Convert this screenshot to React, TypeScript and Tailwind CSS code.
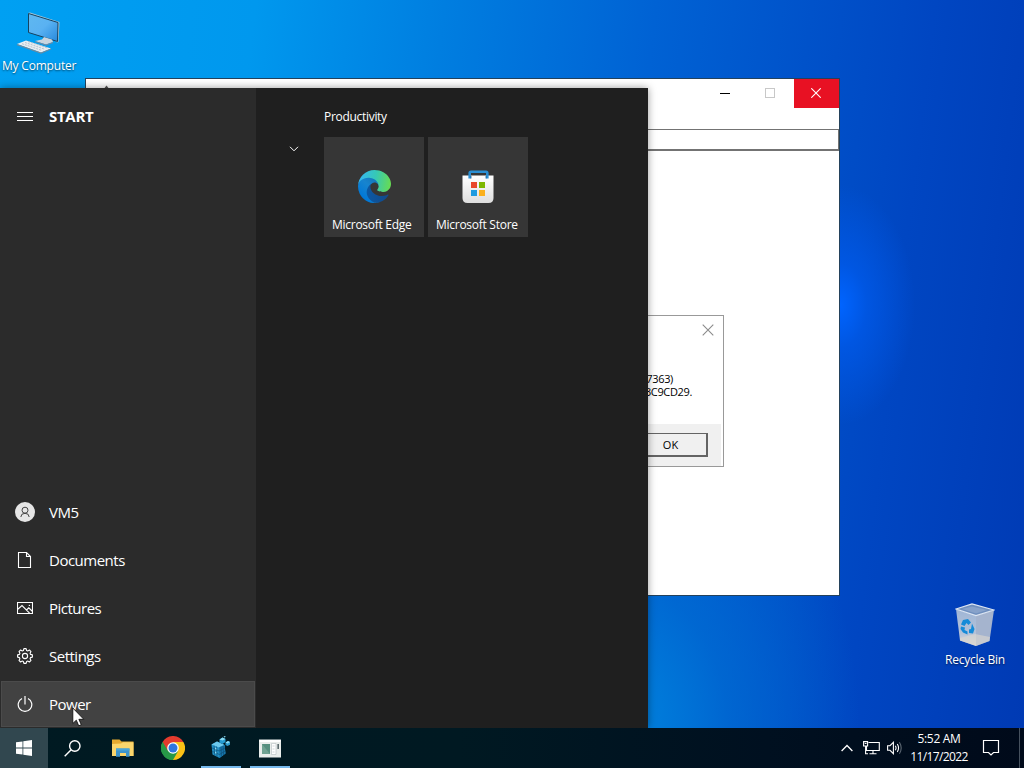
import type { ReactNode } from "react";

function ComputerIcon() {
  return (
    <svg width="44" height="44" viewBox="0 0 44 44">
      <defs>
        <linearGradient id="screen" x1="0" y1="0" x2="1" y2="1">
          <stop offset="0" stopColor="#5fb8f0" />
          <stop offset="0.5" stopColor="#5ab2f2" />
          <stop offset="1" stopColor="#2688dc" />
        </linearGradient>
      </defs>
      <path d="M11 2 L13 1.5 L42.5 11 L41.5 31 L40 31.5 Z" fill="#a9c9dc" />
      <path d="M11.5 2.5 L41 11.5 L40.5 30.5 L11.5 21.5 Z" fill="url(#screen)" stroke="#16425f" strokeWidth="1" />
      <path d="M27 26 L35 28.5 L36 31 L29 33.5 L18 30 L25 28.5 Z" fill="#c9d5df" />
      <path d="M18 30 L29 33.5 L36 31 L36 32 L29 34.7 L18 31 Z" fill="#6c8aa5" />
      <path d="M0 33 L9 29.5 L34 37.5 L24 41.5 Z" fill="#e8edf2" />
      <path d="M0 33 L24 41.5 L34 37.5 L34 38.5 L24 42.8 L0 34.2 Z" fill="#6e8a9c" />
      <path d="M5 32.7 L25 39.5 M8 31.5 L28 38.3 M11 30.5 L31 37.2" stroke="#a9b7c2" strokeWidth=".8" strokeDasharray="2 1" />
    </svg>
  );
}

function RecycleIcon() {
  return (
    <svg width="40" height="44" viewBox="0 0 40 44">
      <defs>
        <linearGradient id="bin" x1="0" y1="0" x2="0" y2="1">
          <stop offset="0" stopColor="#9eb5d6" />
          <stop offset="0.65" stopColor="#b4c2d8" />
          <stop offset="1" stopColor="#e0dcd6" />
        </linearGradient>
      </defs>
      <path d="M1 6 L21 12.5 L21 43 L5 37.5 Z" fill="url(#bin)" />
      <path d="M21 12.5 L39 7 L34.5 38 L21 43 Z" fill="#a5b4ce" />
      <path d="M5 35 L20 31 L35 34 L34.5 38 L21 43 L5 37.5 Z" fill="#d8d5d0" opacity=".65" />
      <path d="M1 6 L17 1 L39 7 L21 12.5 Z" fill="#6f8fbe" stroke="#dde6f2" strokeWidth="1.2" />
      <path d="M7 6 L17 3.5 L32 7 L21 10.5 Z" fill="#87a2ca" />
      <path d="M8 17 L13 16 L16 19.5 L13.5 22 L11.5 20 L9.5 23 L6 21.5 Z M17 20.5 L19.5 26 L18 30.5 L14 30 L14 26.5 L16 26 Z M6 23.5 L10 24.5 L9.5 27 L12.5 28.5 L12.5 31.5 L8 29.5 L5.5 26 Z" fill="#158bd8" />
    </svg>
  );
}

function EdgeIcon() {
  return (
    <svg width="33" height="33" viewBox="0 0 256 256">
      <defs>
        <linearGradient id="edgeDeep" x1="58" y1="177" x2="236" y2="177" gradientUnits="userSpaceOnUse">
          <stop offset="0" stopColor="#0c59a4" />
          <stop offset="1" stopColor="#114a8b" />
        </linearGradient>
        <linearGradient id="edgeBlue" x1="157" y1="100" x2="46" y2="221" gradientUnits="userSpaceOnUse">
          <stop offset="0" stopColor="#1578bd" />
          <stop offset="0.4" stopColor="#1784cf" />
          <stop offset="1" stopColor="#0078d7" />
        </linearGradient>
        <linearGradient id="edgeGreen" x1="15" y1="70" x2="250" y2="105" gradientUnits="userSpaceOnUse">
          <stop offset="0" stopColor="#35b8ee" />
          <stop offset="0.5" stopColor="#36c8b5" />
          <stop offset="1" stopColor="#66db55" />
        </linearGradient>
      </defs>
      <path
        fill="url(#edgeDeep)"
        d="M231.07 190.54c-3.43 1.8-6.96 3.37-10.54 4.71a101.88 101.88 0 0 1-35.89 6.46c-47.32 0-88.54-32.55-88.54-74.32.12-11.41 6.4-21.87 16.43-27.33-42.8 1.8-53.8 46.4-53.8 72.53 0 73.88 68.1 81.37 82.76 81.37 7.91 0 19.84-2.3 27-4.56l1.31-.44a128.34 128.34 0 0 0 66.6-52.8 4 4 0 0 0-5.33-5.62Z"
      />
      <path
        fill="url(#edgeBlue)"
        d="M105.73 241.42a79.2 79.2 0 0 1-22.74-21.34 80.72 80.72 0 0 1 29.53-120c3.12-1.47 8.45-4.12 15.54-4 10.13.07 19.63 4.88 25.69 13a31.88 31.88 0 0 1 6.36 18.66c0-.2 24.46-79.6-80-79.6-43.9 0-80 41.66-80 78.21a130.15 130.15 0 0 0 12.11 56 128 128 0 0 0 156.37 67.11 75.55 75.55 0 0 1-62.78-8Z"
      />
      <path
        fill="url(#edgeGreen)"
        d="M152.33 148.86c-.81 1.05-3.3 2.5-3.3 5.66 0 2.61 1.7 5.12 4.72 7.23 14.38 10 41.49 8.68 41.56 8.68 10.7 0 21.1-2.9 30.3-8.34A61.38 61.38 0 0 0 256 109.08c.26-22.41-8-37.31-11.34-43.91C223.46 23.84 177.72 0 128 0A128 128 0 0 0 0 126.2c.48-36.54 36.8-66.05 80-66.05 3.5 0 23.46.34 42 10.07 16.34 8.58 24.9 18.94 30.85 29.21 6.18 10.67 7.28 24.15 7.28 29.52s-2.74 13.33-7.8 19.91Z"
      />
    </svg>
  );
}

function StoreIcon() {
  return (
    <svg width="32" height="34" viewBox="0 0 32 34">
      <defs>
        <linearGradient id="bag" x1="0" y1="0" x2="0" y2="1">
          <stop offset="0" stopColor="#ffffff" />
          <stop offset="1" stopColor="#dedede" />
        </linearGradient>
      </defs>
      <path d="M.5 5.5 H31.5 V28 Q31.5 33 26.5 33 H5.5 Q.5 33 .5 28 Z" fill="url(#bag)" />
      <path d="M7.7 8.5 V3 Q7.7 1.7 9 1.7 H24 Q25.3 1.7 25.3 3 V8.5" fill="none" stroke="#2a8fd4" strokeWidth="2.6" />
      <path d="M9 6 V8.5 M24 6 V8.5" stroke="#145d96" strokeWidth=".8" />
      <path d="M9 12 H15 V18 H9 Z" fill="#e8472b" />
      <path d="M17 12 H23 V18 H17 Z" fill="#7db700" />
      <path d="M9 20 H15 V26 H9 Z" fill="#1e9be0" />
      <path d="M17 20 H23 V26 H17 Z" fill="#fbb01c" />
    </svg>
  );
}

function UserIcon() {
  return (
    <svg width="20" height="20" viewBox="0 0 20 20">
      <circle cx="10" cy="10" r="10" fill="#e6e6e6" />
      <circle cx="10" cy="8.2" r="3" fill="none" stroke="#444" strokeWidth="1" />
      <path d="M5.8 15 Q6 11.3 10 11.3 Q14 11.3 14.2 15" fill="none" stroke="#444" strokeWidth="1" />
    </svg>
  );
}

function DocumentIcon() {
  return (
    <svg width="16" height="16" viewBox="0 0 16 16" fill="none" stroke="#fff" strokeWidth="1.1">
      <path d="M1.5 .5 H9.5 L13.5 4.5 V15.5 H1.5 Z M9.5 .5 V4.5 H13.5" />
    </svg>
  );
}

function PictureIcon() {
  return (
    <svg width="16" height="16" viewBox="0 0 16 16" fill="none" stroke="#fff" strokeWidth="1.1">
      <path d="M.5 2.5 H15.5 V13.5 H.5 Z M.5 9.5 L5 5.5 L12.8 13.3 M9.5 10 L11.8 7.8 L15.5 11.5" />
      <circle cx="12.4" cy="5.4" r=".7" fill="#fff" stroke="none" />
    </svg>
  );
}

function GearIcon() {
  return (
    <svg width="16" height="16" viewBox="0 0 16 16" fill="none" stroke="#fff" strokeWidth="1.1" strokeLinejoin="round">
      <path d="M6.9 .6 H9.1 L9.6 2.5 L10.7 2.9 L12.4 2 L14 3.6 L13.1 5.3 L13.5 6.4 L15.4 6.9 V9.1 L13.5 9.6 L13.1 10.7 L14 12.4 L12.4 14 L10.7 13.1 L9.6 13.5 L9.1 15.4 H6.9 L6.4 13.5 L5.3 13.1 L3.6 14 L2 12.4 L2.9 10.7 L2.5 9.6 L.6 9.1 V6.9 L2.5 6.4 L2.9 5.3 L2 3.6 L3.6 2 L5.3 2.9 L6.4 2.5 Z" />
      <circle cx="8" cy="8" r="2.6" />
    </svg>
  );
}

function PowerIcon() {
  return (
    <svg width="16" height="16" viewBox="0 0 16 16" fill="none" stroke="#fff" strokeWidth="1.2">
      <path d="M8 0 V8.5 M5 2.5 A6.8 6.8 0 1 0 11 2.5" />
    </svg>
  );
}

function ChromeIcon() {
  return (
    <svg width="24" height="24" viewBox="0 0 24 24">
      <path d="M12 12 L1.6 6 A12 12 0 0 1 22.4 6 Z" fill="#e33b2e" />
      <path d="M12 12 L22.4 6 A12 12 0 0 1 12 24 Z" fill="#fbc116" />
      <path d="M12 12 L12 24 A12 12 0 0 1 1.6 6 Z" fill="#279847" />
      <path d="M12 6 H22.4 L17 14.7 Z" fill="#fbc116" />
      <path d="M6.8 15 L1.6 6 L12 6.2 Z" fill="#e33b2e" />
      <path d="M1.6 6 L6.8 15 L12 17.5 L17.2 15 L12 24 A12 12 0 0 1 1.6 6 Z" fill="#279847" />
      <circle cx="12" cy="12" r="5.8" fill="#fff" />
      <circle cx="12" cy="12" r="4.5" fill="#2f76e0" />
    </svg>
  );
}

function FolderIcon() {
  return (
    <svg width="22" height="20" viewBox="0 0 22 20">
      <path d="M0 1.5 H7.5 L9.5 3.5 H21.5 V18 H0 Z" fill="#e5aa31" />
      <path d="M0 6 L9 5.5 L11 4.2 H21.5 V18 H0 Z" fill="#fbd66c" />
      <path d="M4 18.8 V10.5 H17.5 V18.8 H14 V15 H8 V18.8 Z" fill="#3d94cc" />
      <path d="M4 10.5 H17.5 V12.5 H4 Z" fill="#4ba6d9" />
    </svg>
  );
}

function RegistryIcon() {
  return (
    <svg width="22" height="24" viewBox="0 0 22 24">
      <path d="M1.5 8.5 L7 5.5 L14.5 9 L15.5 17.5 L9.5 22 L2.5 18.5 Z" fill="#2491c6" />
      <path d="M1.5 8.5 L7 5.5 L14.5 9 L9 11.5 Z" fill="#6cc8ec" />
      <path d="M9 11.5 L14.5 9 L15.5 17.5 L9.5 22 Z" fill="#1675ab" />
      <path d="M4 9.5 L4.8 19.7 M6.5 10.5 L7 20.8 M11 10.6 L11.5 20.5 M13 9.8 L13.6 19 M2 12 L9.2 15 L15 12 M2.2 15.3 L9.4 18.5 L15.2 15" stroke="#0b4a70" strokeWidth=".6" fill="none" />
      <path d="M9.5 3.5 L12.5 1.5 L15.5 3 V6 L12.5 8 L9.5 6.5 Z" fill="#249bd1" />
      <path d="M9.5 3.5 L12.5 1.5 L15.5 3 L12.5 4.6 Z" fill="#8bdcf4" />
      <path d="M15.5 6.5 L18 5 L20 6 V8.8 L17.5 10 L15.5 9 Z" fill="#2c9acb" />
      <path d="M15.5 6.5 L18 5 L20 6 L17.7 7.4 Z M13.5 .8 L14.8 0 L15.8 .7 L14.6 1.6 Z M5 11.5 L6.3 12.1 V13.8 L5 13.2 Z M5 15.5 L6.3 16.1 V17.8 L5 17.2 Z" fill="#8edcf4" />
    </svg>
  );
}

function AppWindowIcon() {
  return (
    <svg width="22" height="19" viewBox="0 0 22 19">
      <path d="M0 .5 H22 V18.5 H0 Z" fill="#e9edeb" />
      <path d="M.5 1 H21.5 V3 H.5 Z" fill="#fff" />
      <path d="M3 5 H11 V15 H3 Z" fill="#568f7f" />
      <path d="M3 5 L11 15 H3 Z" fill="#70a292" />
      <path d="M12.5 4.5 H17 V15.5 H12.5 Z" fill="#fff" stroke="#b3bdc0" strokeWidth=".6" />
      <path d="M13.5 7 H15.5 M13.5 10 H15.5 M13.5 13 H15.5" stroke="#bcc6c8" strokeWidth=".7" />
      <path d="M18.5 5 H19.8 V10 H18.5 Z" fill="#394b50" />
    </svg>
  );
}

function DesktopIcon({ label, children }: { label: ReactNode; children: ReactNode }) {
  return (
    <div className="flex flex-col items-center text-xs leading-4 text-white whitespace-nowrap [text-shadow:0_1px_2px_#0009]">
      {children}
      {label}
    </div>
  );
}

function MenuRow({ icon, label, active }: { icon: ReactNode; label: string; active?: boolean }) {
  return (
    <div
      className={
        active
          ? "flex items-center h-[46px] mt-px ml-px bg-[#424242] border border-[#4b4b4b] text-white"
          : "flex items-center h-12 text-white"
      }
    >
      <span className={active ? "w-[47px] pl-[15px] flex" : "w-[49px] flex justify-center"}>{icon}</span>
      <span className="text-[15px] tracking-[-0.5px]">{label}</span>
    </div>
  );
}

function Tile({ icon, label }: { icon: ReactNode; label: string }) {
  return (
    <div className="w-[100px] h-[100px] bg-[#363636] flex flex-col items-center pt-[33px]">
      <div className="h-[46px]">{icon}</div>
      <span className="w-full pl-2 text-xs leading-[18px] tracking-[-0.27px] text-white whitespace-nowrap">{label}</span>
    </div>
  );
}

function StartMenu() {
  return (
    <div className="absolute left-0 top-[88px] w-[648px] h-[640px] flex bg-[#1f1f1f] shadow-[0_0_8px_rgba(0,0,0,0.4)]">
      <aside className="w-64 bg-[#2b2b2b] flex flex-col justify-between">
        <div className="flex items-center h-14 pl-[17px] gap-4">
          <svg className="mt-px" width="16" height="10" viewBox="0 0 16 10" stroke="#fff">
            <path d="M0 .5 H16 M0 4.5 H16 M0 8.5 H16" />
          </svg>
          <span className="text-[15px] font-bold text-white tracking-[-0.3px]">START</span>
        </div>
        <div className="pr-px">
          <MenuRow icon={<UserIcon />} label="VM5" />
          <MenuRow icon={<DocumentIcon />} label="Documents" />
          <MenuRow icon={<PictureIcon />} label="Pictures" />
          <MenuRow icon={<GearIcon />} label="Settings" />
          <MenuRow icon={<PowerIcon />} label="Power" active />
          <div className="h-px" />
        </div>
      </aside>
      <div className="flex pl-[33px] pt-5">
        <svg className="mt-[38px] mr-[25px]" width="10" height="6" viewBox="0 0 10 6" fill="none" stroke="#fff">
          <path d="M1 .8 L5 4.8 L9 .8" />
        </svg>
        <div>
          <div className="text-xs leading-[18px] tracking-[-0.3px] text-white">Productivity</div>
          <div className="flex gap-1 mt-[11px]">
            <Tile icon={<EdgeIcon />} label="Microsoft Edge" />
            <Tile icon={<StoreIcon />} label="Microsoft Store" />
          </div>
        </div>
      </div>
    </div>
  );
}

function MessageBox() {
  return (
    <div className="absolute left-[360px] top-[236px] w-[278px] h-[152px] flex flex-col bg-white border border-[#999]">
      <div className="flex justify-end pt-2 pr-[9px] h-14">
        <svg width="12" height="12" viewBox="0 0 12 12" stroke="#8b8b8b" strokeWidth="1.1">
          <path d="M.7 .7 L11.3 11.3 M11.3 .7 L.7 11.3" />
        </svg>
      </div>
      <div className="flex-1 text-[11px] leading-[13px] tracking-[-0.35px] text-black flex flex-col items-end">
        <span className="pr-[50px]">7363)</span>
        <span className="pr-[31px]">3C9CD29.</span>
      </div>
      <div className="h-[42px] mr-[2px] bg-[#f0f0f0] flex justify-end pt-[9px] pr-[13px]">
        <button className="w-[74px] h-6 bg-[#f0f0f0] border-t border-l border-r-2 border-b-2 border-[#646464] text-[11px] leading-5 text-black">
          OK
        </button>
      </div>
    </div>
  );
}

function AppWindow() {
  return (
    <div className="absolute left-[85px] top-[78px] w-[755px] h-[518px] border border-[#24425c] bg-white">
      <div className="flex justify-end h-[50px] relative">
        <svg className="absolute left-4 top-[6px]" width="9" height="9" viewBox="0 0 9 9">
          <path d="M1 5 L4.5 .5 L8 5 V9 H1 Z" fill="#555" />
        </svg>
        <div className="w-[45px] h-[29px] flex justify-center items-center pr-[3px]">
          <div className="w-[10px] h-px bg-black" />
        </div>
        <div className="w-[45px] h-[29px] flex justify-center items-center pr-[3px] pb-px">
          <div className="w-[10px] h-[10px] border border-[#c8c8c8]" />
        </div>
        <div className="w-[45px] h-[29px] flex justify-center items-center pr-px pb-px bg-[#e81123]">
          <svg width="10" height="10" viewBox="0 0 10 10" stroke="#fff" strokeWidth="1.1">
            <path d="M.3 .3 L9.7 9.7 M9.7 .3 L.3 9.7" />
          </svg>
        </div>
      </div>
      <div className="h-[22px] border-t border-r border-b-2 border-[#737373]" />
      <MessageBox />
    </div>
  );
}

function TaskButton({ children, open }: { children: ReactNode; open?: boolean }) {
  return (
    <div className={open ? "w-10 h-10 mr-[9px] flex items-center justify-center border-b-2 border-[#76b9ed] pt-0.5" : "w-[50px] h-10 flex items-center justify-center"}>
      {children}
    </div>
  );
}

function Taskbar() {
  return (
    <footer className="h-10 flex items-center justify-between bg-[linear-gradient(90deg,#001a22_0%,#001922_45%,#001020_75%,#000a1a_100%)] text-white relative">
      <div className="flex">
        <div className="w-12 h-10 bg-[#31474f] flex items-center justify-center">
          <svg width="16" height="16" viewBox="0 0 16 16" fill="#fff">
            <path d="M0 2.3 L6.5 1.4 V7.6 H0 Z M7.3 1.3 L16 0 V7.6 H7.3 Z M0 8.4 H6.5 V14.6 L0 13.7 Z M7.3 8.4 H16 V16 L7.3 14.7 Z" />
          </svg>
        </div>
        <TaskButton>
          <svg className="-ml-0.5" width="17" height="17" viewBox="0 0 17 17" fill="none" stroke="#fff" strokeWidth="1.4">
            <circle cx="10.8" cy="6" r="5.2" />
            <path d="M7.2 9.8 L.7 16.3" />
          </svg>
        </TaskButton>
        <TaskButton><FolderIcon /></TaskButton>
        <TaskButton><ChromeIcon /></TaskButton>
        <div className="flex ml-[3px]">
          <TaskButton open><RegistryIcon /></TaskButton>
          <TaskButton open><AppWindowIcon /></TaskButton>
        </div>
      </div>
      <div className="flex items-center h-10">
        <svg className="mr-[10px]" width="12" height="8" viewBox="0 0 12 8" fill="none" stroke="#fff" strokeWidth="1.3">
          <path d="M.6 7 L6 1.5 L11.4 7" />
        </svg>
        <svg className="mr-[7px]" width="17" height="14" viewBox="0 0 17 14" fill="none" stroke="#fff" strokeWidth="1.1">
          <path d="M5.5 1.5 H16.3 V9.5 H3.5 V5.5 M.6 .6 H4.6 V5 H.6 Z M2.6 5 V12.8 H5 M10 9.5 V12.8 M6.5 12.8 H13.5 M1.8 2.5 H3.5" />
        </svg>
        <svg className="mr-[7px]" width="16" height="14" viewBox="0 0 16 14" fill="none" stroke="#fff" strokeWidth="1.1">
          <path d="M.6 4.7 H3 L6.4 1.3 V12.7 L3 9.3 H.6 Z M8.3 4.8 Q9.8 7 8.3 9.2 M10.3 3 Q12.8 7 10.3 11" />
          <path d="M12.4 1.3 Q16 7 12.4 12.7" stroke="#5c6873" />
        </svg>
        <div className="w-[58px] text-xs leading-[18px] text-center whitespace-nowrap">
          <div className="tracking-[-0.3px]">5:52 AM</div>
          <div className="tracking-[-0.6px]">11/17/2022</div>
        </div>
        <svg className="ml-[14px]" width="18" height="18" viewBox="0 0 18 18" fill="none" stroke="#fff" strokeWidth="1.2">
          <path d="M1.5 1.5 H16.5 V13.5 H11.5 L9 16 L6.5 13.5 H1.5 Z" />
        </svg>
        <div className="ml-[19px] mr-1 w-px h-10 bg-[#46515e]" />
      </div>
    </footer>
  );
}

export default function App() {
  return (
    <div className="relative w-[1024px] h-[768px] overflow-hidden flex flex-col font-['Open_Sans','Noto_Sans',sans-serif] bg-[#0040b8]">
      <main className="relative flex-1 bg-[radial-gradient(ellipse_75px_120px_at_840px_305px,#0064ff_0%,#005cf0aa_35%,#0050d800_100%),radial-gradient(ellipse_240px_320px_at_620px_728px,#0084de_0%,#0070d4aa_45%,#0058c800_100%),linear-gradient(97deg,#00a0f2_0%,#0098ee_23%,#007ee0_40%,#0062d4_59%,#0052ca_73%,#0046c2_84%,#003ab4_100%)]">
        <div className="absolute left-[2px] top-[11px]">
          <DesktopIcon label={<span className="mt-[3px] tracking-[-0.2px]">My Computer</span>}>
            <ComputerIcon />
          </DesktopIcon>
        </div>
        <div className="absolute left-[945px] top-[603px]">
          <DesktopIcon label={<span className="mt-[5px] tracking-[-0.25px]">Recycle Bin</span>}>
            <RecycleIcon />
          </DesktopIcon>
        </div>
        <AppWindow />
        <StartMenu />
      </main>
      <Taskbar />
      <svg className="absolute left-[72px] top-[707px]" width="13" height="20" viewBox="0 0 13 20">
        <path d="M.8 1 V16.5 L4.3 13.2 L6.7 18.8 L9.3 17.7 L6.9 12.3 H11.8 Z" fill="#fff" stroke="#111" strokeWidth=".9" />
      </svg>
    </div>
  );
}
